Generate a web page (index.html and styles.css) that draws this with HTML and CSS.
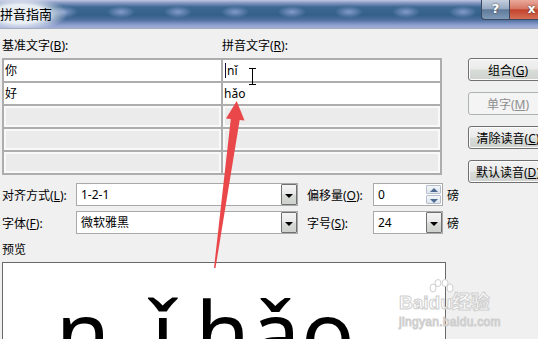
FILE: index.html
```html
<!DOCTYPE html>
<html lang="zh-CN">

<head>
  <meta charset="UTF-8" />
  <title>拼音指南</title>
  <link rel="stylesheet" href="styles.css">
</head>

<body>
  <div class="window">
    <div class="titlebar">
      <span class="title">拼音指南</span>
      <div class="caption">
        <span class="cap-help">?</span>
        <span class="cap-close">x</span>
      </div>
    </div>

    <div class="dialog">
      <div class="top">
        <div class="guide">
          <div class="labels">
            <span>基准文字(<u>B</u>):</span>
            <span>拼音文字(<u>R</u>):</span>
          </div>
          <div class="table">
            <div class="cell">你</div>
            <div class="cell"><span class="caret"></span>nǐ</div>
            <div class="cell">好</div>
            <div class="cell">hǎo</div>
            <div class="cell empty"></div>
            <div class="cell empty"></div>
            <div class="cell empty"></div>
            <div class="cell empty"></div>
            <div class="cell empty"></div>
            <div class="cell empty"></div>
          </div>
        </div>

        <div class="actions">
          <button class="btn">组合(<u>G</u>)</button>
          <button class="btn" disabled>单字(<u>M</u>)</button>
          <button class="btn">清除读音(<u>C</u>)</button>
          <button class="btn">默认读音(<u>D</u>)</button>
        </div>
      </div>

      <div class="options">
        <label>对齐方式(<u>L</u>):</label>
        <div class="combo"><span>1-2-1</span><span class="drop"></span></div>
        <label class="second">偏移量(<u>O</u>):</label>
        <div class="combo small">
          <span>0</span>
          <span class="spin"><span class="up"></span><span class="down"></span></span>
        </div>
        <span class="unit">磅</span>

        <label>字体(<u>F</u>):</label>
        <div class="combo"><span>微软雅黑</span><span class="drop"></span></div>
        <label class="second">字号(<u>S</u>):</label>
        <div class="combo small"><span>24</span><span class="drop"></span></div>
        <span class="unit">磅</span>
      </div>

      <div class="preview-label">预览</div>
      <div class="preview">
        <span class="syl"><span>n</span><span>ǐ</span></span><span class="syl"><span>h</span><span>ǎ</span><span>o</span></span>
      </div>
    </div>

    <!-- mouse cursor -->
    <svg class="ibeam" width="9" height="17" viewBox="0 0 9 17">
      <path d="M1 0.5h7M4.5 0.5v16M1 16.5h7" stroke="#000" stroke-width="1" fill="none" />
    </svg>

    <!-- annotation arrow -->
    <svg class="arrow" width="538" height="339" viewBox="0 0 538 339">
      <polygon points="231,117 240,118 215.5,268 214,268" fill="#e9474a" />
      <polygon points="236.7,101 226,118.5 244.5,120.5" fill="#e9474a" />
    </svg>

    <div class="watermark">
      <div class="wm-logo">Bai<span class="wm-du">du<svg class="paw" width="26" height="16" viewBox="0 0 26 16">
            <ellipse cx="5" cy="9" rx="3" ry="4" />
            <ellipse cx="10" cy="4" rx="3" ry="3.5" />
            <ellipse cx="17" cy="4" rx="3" ry="3.5" />
            <ellipse cx="22" cy="9" rx="3" ry="4" />
          </svg></span>经验</div>
      <div class="wm-url">jingyan.baidu.com</div>
    </div>
  </div>
</body>

</html>
```

FILE: styles.css
```css
body {
  margin: 0;
  font-family: "Noto Sans", "Noto Sans CJK SC", sans-serif;
  font-size: 12px;
  color: #000;
  background-color: #f0f0f0;
}

.window {
  position: relative;
  width: 538px;
  height: 339px;
  overflow: hidden;
  background-color: #f0f0f0;
}

/* aero title bar */
.titlebar {
  height: 28px;
  display: flex;
  justify-content: space-between;
  align-items: flex-start;
  border-bottom: 1px solid #a4adbd;
  background:
    radial-gradient(ellipse 48px 17px at 20px 14px, rgba(238, 242, 247, 0.97) 55%, rgba(220, 228, 240, 0) 100%),
    radial-gradient(ellipse 14px 6px at 28px 12px, rgba(140, 160, 210, 0.9), rgba(140, 160, 210, 0) 100%) 36px 0 / 57px 28px repeat-x,
    linear-gradient(#bfc6e2 0, #8497c2 3px, #3d6891 7px, #336089 15px, #4f70a0 20px, #8e9fcf 25px, #a2add6 28px);
}

.title {
  font-family: "Noto Sans CJK SC", sans-serif;
  font-size: 13px;
  line-height: 28px;
  color: #000;
  letter-spacing: 0;
}

.caption {
  display: flex;
  margin-right: -16px;
}

.cap-help,
.cap-close {
  height: 19px;
  border: 1px solid #3b4a5e;
  border-top: none;
  color: #fff;
  font-family: "DejaVu Sans", sans-serif;
  font-weight: bold;
  text-align: center;
  line-height: 18px;
  text-shadow: 0 0 2px #333;
}

.cap-help {
  width: 27px;
  font-size: 13px;
  border-radius: 0 0 0 4px;
  background: linear-gradient(#c5cfdf 0, #97a9c2 45%, #5f7a98 52%, #7f99b8 100%);
}

.cap-close {
  width: 43px;
  font-size: 12px;
  border-left: none;
  background: linear-gradient(#eaa99a 0, #d77865 45%, #c3432d 52%, #d56f55 100%);
}

.dialog {
  padding-left: 2px;
}

.top {
  display: flex;
  height: 154px;
}

.guide {
  width: 440px;
}

.labels {
  display: flex;
  margin-top: 9px;
  line-height: 16px;
}

.labels span {
  width: 220px;
}

.table {
  box-sizing: border-box;
  width: 440px;
  margin-top: 4px;
  display: grid;
  grid-template-columns: 217px 217px;
  grid-auto-rows: 21px;
  gap: 2px;
  padding: 2px;
  background-color: #adadad;
}

.cell {
  background-color: #fff;
  padding-left: 1px;
  line-height: 21px;
  display: flex;
  align-items: center;
}

.cell.empty {
  background-color: #ebebeb;
  box-shadow: inset 0 0 0 2px #f9f9f9;
}

.caret {
  display: inline-block;
  width: 1px;
  height: 15px;
  background-color: #10103a;
  margin: 0 1px 0 1px;
}

.actions {
  display: flex;
  flex-direction: column;
  gap: 11px;
  margin-left: 26px;
  padding-top: 29px;
}

.btn {
  width: 80px;
  height: 23px;
  padding: 0;
  font-family: "Noto Sans", "Noto Sans CJK SC", sans-serif;
  font-size: 12px;
  color: #000;
  border: 1px solid #707070;
  border-radius: 3px;
  background: linear-gradient(#f2f2f2 0, #ebebeb 48%, #d9ddd8 52%, #cfd2cf 100%);
  box-shadow: inset 0 0 0 1px #fbfbfb;
}

.btn:disabled {
  color: #8e8e8e;
  border-color: #adb2b5;
  background: #f4f4f4;
  box-shadow: none;
}

.options {
  display: grid;
  grid-template-columns: 74px 222px 75px 70px auto;
  grid-auto-rows: 23px;
  row-gap: 5px;
  align-items: center;
}

.options label.second {
  padding-left: 9px;
}

.combo {
  box-sizing: border-box;
  height: 23px;
  display: flex;
  justify-content: space-between;
  align-items: stretch;
  border: 1px solid #a9a9a9;
  background-color: #fff;
  line-height: 21px;
  padding-left: 4px;
}

.drop {
  width: 14px;
  margin: 0;
  border: 1px solid #707070;
  border-radius: 1px;
  background: linear-gradient(#f4f4f4 0, #e9e9e9 48%, #d8dbd6 52%, #cdd0cc 100%);
  position: relative;
}

.drop::after {
  content: "";
  position: absolute;
  left: 3px;
  top: 9px;
  border-left: 4px solid transparent;
  border-right: 4px solid transparent;
  border-top: 4px solid #000;
}

.spin {
  width: 15px;
  display: flex;
  flex-direction: column;
  gap: 1px;
  padding: 1px 1px 1px 0;
}

.spin span {
  flex: 1;
  border: 1px solid #b6bfcc;
  border-radius: 1px;
  background: linear-gradient(#f3f6fa, #dfe6ee);
  position: relative;
}

.spin .up::after,
.spin .down::after {
  content: "";
  position: absolute;
  left: 3px;
  border-left: 4px solid transparent;
  border-right: 4px solid transparent;
}

.spin .up::after {
  top: 2px;
  border-bottom: 4px solid #4d6a92;
}

.spin .down::after {
  top: 3px;
  border-top: 4px solid #4d6a92;
}

.unit {
  padding-left: 4px;
}

.preview-label {
  margin-top: 8px;
  line-height: 16px;
}

.preview {
  box-sizing: border-box;
  width: 444px;
  height: 120px;
  margin-top: 4px;
  border: 1px solid #696969;
  background-color: #fff;
  padding: 24px 0 0 32px;
  font-family: "Noto Sans", sans-serif;
  font-size: 88px;
  line-height: 88px;
  white-space: nowrap;
}

.syl {
  display: inline-flex;
  justify-content: space-around;
  width: 160px;
}

/* overlays */
.ibeam {
  position: absolute;
  left: 248px;
  top: 68px;
}

.arrow {
  position: absolute;
  left: 0;
  top: 0;
  pointer-events: none;
}

.watermark {
  position: absolute;
  left: 399px;
  top: 284px;
  color: #fff;
  -webkit-text-stroke: 1px #cfcfcf;
  font-family: "Liberation Sans", "Noto Sans CJK SC", sans-serif;
}

.wm-logo {
  font-size: 19px;
  font-weight: bold;
  line-height: 26px;
  padding-top: 6px;
}

.wm-du {
  position: relative;
}

.paw {
  position: absolute;
  left: -1px;
  top: -13px;
  fill: #fff;
  stroke: #cfcfcf;
  stroke-width: 1;
}

.wm-url {
  font-size: 12px;
  line-height: 12px;
  letter-spacing: 0.3px;
}
```
